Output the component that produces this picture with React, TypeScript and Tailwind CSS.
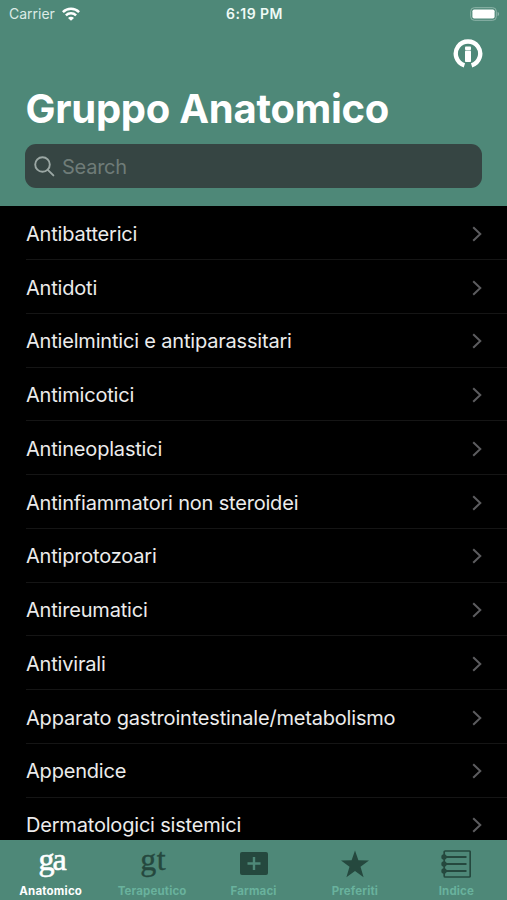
import type { ReactNode } from "react";

const groups = [
  "Antibatterici",
  "Antidoti",
  "Antielmintici e antiparassitari",
  "Antimicotici",
  "Antineoplastici",
  "Antinfiammatori non steroidei",
  "Antiprotozoari",
  "Antireumatici",
  "Antivirali",
  "Apparato gastrointestinale/metabolismo",
  "Appendice",
  "Dermatologici sistemici",
];

function StatusBar() {
  return (
    <div className="grid h-7 grid-cols-3 items-center pr-[7px] pb-px pl-[9px] text-[14px] leading-none">
      <div className="flex items-center gap-[7px] text-[#dcebe6]">
        <span className="pt-px text-[14px]">Carrier</span>
        <svg width="18" height="14" viewBox="0 0 18 14" fill="none" stroke="#fff" strokeWidth="2.5">
          <path d="M0.9 5.1a11.5 11.5 0 0 1 16.2 0" />
          <path d="M3.9 8.3a7.3 7.3 0 0 1 10.2 0" />
          <path d="M9 13.8 6 10.9a4.2 4.2 0 0 1 6 0z" fill="#fff" stroke="none" />
        </svg>
      </div>
      <div className="text-center font-semibold tracking-[0.45px] text-[#eefaf6]">6:19 PM</div>
      <div className="flex justify-end">
        <svg width="30" height="14" viewBox="0 0 30 14">
          <rect x="0.7" y="0.7" width="25.6" height="12.6" rx="3.6" fill="none" stroke="#8fb5aa" />
          <rect x="2.4" y="2.4" width="22.2" height="9.2" rx="1.8" fill="#fff" />
          <path d="M27.6 4.8c2 .8 2 3.6 0 4.4z" fill="#8fb5aa" />
        </svg>
      </div>
    </div>
  );
}

function InfoIcon() {
  return (
    <svg width="30" height="30" viewBox="0 0 30 30" fill="none">
      <path d="M11.4 26.3A12.2 12.2 0 1 1 18.6 26.3" stroke="#fff" strokeWidth="4.4" />
      <rect x="12" y="7.4" width="6" height="3.7" rx="0.8" fill="#fff" />
      <rect x="12" y="11.6" width="6" height="11.4" rx="0.8" fill="#fff" />
    </svg>
  );
}

function Row({ label }: { label: string }) {
  return (
    <li className="flex h-[53.75px] shrink-0 pl-[26px]">
      <div className="flex flex-1 items-center justify-between border-b border-[#151515] pt-[2px] pr-[25px]">
        <span className="text-[20px] tracking-[-0.19px] whitespace-nowrap text-[#ececec]">{label}</span>
        <svg width="10" height="16" viewBox="0 0 10 16" fill="none" stroke="#5c5c5f" strokeWidth="2">
          <path d="M1.2 1.2 8.3 8 1.2 14.8" />
        </svg>
      </div>
    </li>
  );
}

function Tab({ label, active, children }: { label: string; active?: boolean; children: ReactNode }) {
  return (
    <div className={active ? "flex flex-1 flex-col items-center text-white" : "flex flex-1 flex-col items-center text-[#25483e]"}>
      <div className="flex h-[43px] items-center justify-center pt-[4px]">{children}</div>
      <span
        className={
          active
            ? "text-[11.5px] leading-4 font-bold tracking-[0.2px] text-white"
            : "text-[11.5px] leading-4 font-bold tracking-[0.15px] text-[#69b29d]"
        }
      >
        {label}
      </span>
    </div>
  );
}

export default function App() {
  return (
    <div className="flex h-[900px] w-[507px] flex-col overflow-hidden bg-black font-['Inter',sans-serif]">
      <header className="h-[206.4px] shrink-0 bg-[#4e8878] text-white">
        <StatusBar />
        <div className="flex h-[54px] justify-end pt-[11px] pr-[24.5px]">
          <InfoIcon />
        </div>
        <h1 className="pl-[25.5px] text-[40px] leading-[54px] font-bold tracking-[-0.27px] whitespace-nowrap">Gruppo Anatomico</h1>
        <div className="mx-[25px] mt-2 flex h-[43.5px] items-center gap-[7px] rounded-[11px] bg-[#364543] pt-px pl-[9px]">
          <svg width="21" height="21" viewBox="0 0 21 21" fill="none" stroke="#9ba7a4" strokeWidth="1.9">
            <circle cx="8.5" cy="8.5" r="7.3" />
            <path d="m13.8 13.8 5.6 5.6" strokeLinecap="round" />
          </svg>
          <span className="pt-px text-[20px] tracking-[-0.25px] text-[#6f7c78]">Search</span>
        </div>
      </header>

      <ul className="flex min-h-0 flex-1 flex-col overflow-hidden">
        {groups.map((label) => (
          <Row key={label} label={label} />
        ))}
      </ul>

      <nav className="flex h-[60px] shrink-0 bg-[#4e8878]">
        <Tab label="Anatomico" active>
          <span className="pb-[9px] pl-[2px] font-['Liberation_Serif',serif] text-[32px] leading-[38px] tracking-[-1.8px] [-webkit-text-stroke:0.6px_currentColor]">ga</span>
        </Tab>
        <Tab label="Terapeutico">
          <span className="pb-[9px] pl-[2px] font-['Liberation_Serif',serif] text-[32px] leading-[38px] tracking-[0.3px] [-webkit-text-stroke:0.4px_currentColor]">gt</span>
        </Tab>
        <Tab label="Farmaci">
          <svg width="28" height="24" viewBox="0 0 28 24">
            <rect width="28" height="23" rx="2" fill="currentColor" />
            <path d="M14 5v13M7.5 11.5h13" stroke="#4e8878" strokeWidth="2.4" />
          </svg>
        </Tab>
        <Tab label="Preferiti">
          <svg width="28" height="28" viewBox="0 0 28 28" fill="currentColor">
            <path d="M14 0.5 17.4 10.2 28 10.4 19.5 16.8 22.6 27.2 14 21 5.4 27.2 8.5 16.8 0 10.4 10.6 10.2z" />
          </svg>
        </Tab>
        <Tab label="Indice">
          <svg width="30" height="28" viewBox="0 0 30 28" fill="none" stroke="currentColor">
            <rect x="3.2" y="1" width="26" height="26" rx="1" strokeWidth="1.7" />
            <path d="M3 7h22.5M3 14h22.5M3 21h22.5" strokeWidth="1.9" />
            <g fill="currentColor" stroke="none">
              <circle cx="3" cy="7" r="2.7" />
              <circle cx="3" cy="14" r="2.7" />
              <circle cx="3" cy="21" r="2.7" />
            </g>
          </svg>
        </Tab>
      </nav>
    </div>
  );
}
